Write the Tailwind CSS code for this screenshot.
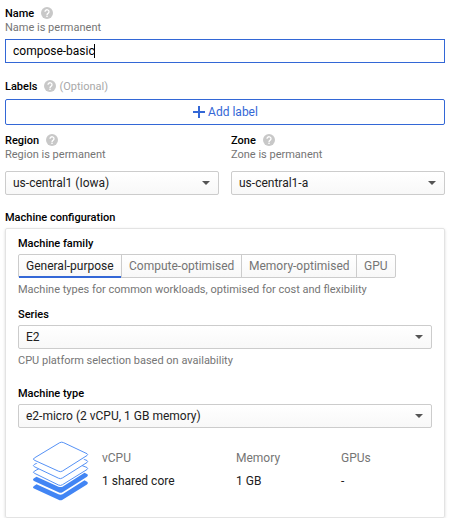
<!DOCTYPE html>
<html lang="en">
<head>
<meta charset="utf-8">
<title>Create instance</title>
<script src="https://cdn.jsdelivr.net/npm/@tailwindcss/browser@4"></script>
</head>
<body class="bg-white font-['Roboto',sans-serif] text-[12px] text-[#212121]">
<svg class="hidden">
  <symbol id="help" viewBox="0 0 12 12"><circle cx="6" cy="6" r="6" fill="#c8c8c8"/><path d="M4 4.7a2 1.9 0 1 1 3.2 1.5C6.4 6.8 6 7 6 7.9" fill="none" stroke="#fff" stroke-width="1.3"/><rect x="5.3" y="8.6" width="1.4" height="1.4" fill="#fff"/></symbol>
  <symbol id="caret" viewBox="0 0 8 4"><path d="M0 0h8L4 4z" fill="#555"/></symbol>
</svg>
<main class="flex w-[452px] flex-col pt-[6px] pr-[7px] pl-[5px]">
  <div class="flex h-[14px] items-center gap-[7px] text-[11px] font-medium text-black"><span class="pt-[2px]">Name</span><svg class="size-3"><use href="#help"/></svg></div>
  <p class="h-[14px] text-[11px] leading-[16px] text-[#757575]">Name is permanent</p>
  <div class="mt-[5px] flex h-6 items-center border border-[#3367d6] pl-[7px] text-black"><span>compose-basic</span><span class="-ml-px h-[14px] w-px bg-black"></span></div>

  <div class="mt-4 flex h-[14px] items-center text-[11px] font-medium text-black"><span class="pt-[2px]">Labels</span><svg class="ml-[7px] size-3"><use href="#help"/></svg><span class="ml-[3px] pt-[2px] font-normal text-[#a8a8a8]">(Optional)</span></div>
  <button class="mt-[6px] flex h-[26px] items-center justify-center gap-[3px] rounded-[2px] border border-[#3367d6] pl-px text-[#3367d6]"><svg class="size-3" viewBox="0 0 12 12"><path d="M6 0v12M0 6h12" stroke="#3367d6" stroke-width="2"/></svg><span>Add label</span></button>

  <div class="mt-2 grid grid-cols-2 gap-3">
    <div>
      <div class="flex h-[14px] items-center gap-[7px] text-[11px] font-medium text-black"><span class="pt-[2px]">Region</span><svg class="size-3"><use href="#help"/></svg></div>
      <p class="h-[14px] text-[11px] leading-[16px] text-[#757575]">Region is permanent</p>
      <div class="mt-[10px] flex h-6 items-center justify-between rounded-[2px] border border-[#ccc] bg-linear-to-b from-white to-[#f8f8f8] pr-2 pl-[7px]"><span>us-central1 (Iowa)</span><svg class="h-1 w-2"><use href="#caret"/></svg></div>
    </div>
    <div>
      <div class="flex h-[14px] items-center gap-[7px] text-[11px] font-medium text-black"><span class="pt-[2px]">Zone</span><svg class="size-3"><use href="#help"/></svg></div>
      <p class="h-[14px] text-[11px] leading-[16px] text-[#757575]">Zone is permanent</p>
      <div class="mt-[10px] flex h-6 items-center justify-between rounded-[2px] border border-[#ccc] bg-linear-to-b from-white to-[#f8f8f8] pr-2 pl-[7px]"><span>us-central1-a</span><svg class="h-1 w-2"><use href="#caret"/></svg></div>
    </div>
  </div>

  <h2 class="mt-[15px] h-[14px] text-[11px] leading-[16px] font-medium text-black">Machine configuration</h2>
  <section class="mt-1 flex h-[290px] flex-col rounded-[2px] border border-[#e3e3e3] px-3 pt-[7px] shadow-[0_1px_3px_rgba(0,0,0,0.15)]">
    <h3 class="h-[14px] text-[11px] leading-[16px] font-medium text-black">Machine family</h3>
    <div class="mt-1 flex h-6 w-[378px] rounded-[2px] border border-[#ccc] bg-linear-to-b from-white to-[#f8f8f8] text-[#757575]">
      <div class="-mb-px flex w-[103px] items-center border-r border-r-[#ccc] pb-px pl-[7px] text-[#212121] shadow-[inset_0_-2px_0_#3367d6]">General-purpose</div>
      <div class="flex w-[120px] items-center border-r border-[#ccc] pl-[7px]">Compute-optimised</div>
      <div class="flex w-[115px] items-center border-r border-[#ccc] pl-[7px]">Memory-optimised</div>
      <div class="flex items-center pl-[7px]">GPU</div>
    </div>
    <p class="mt-1 h-[14px] text-[11px] leading-[16px] text-[#757575]">Machine types for common workloads, optimised for cost and flexibility</p>
    <h3 class="mt-[11px] h-[14px] text-[11px] leading-[16px] font-medium text-black">Series</h3>
    <div class="mt-1 flex h-6 items-center justify-between rounded-[2px] border border-[#ccc] bg-linear-to-b from-white to-[#f8f8f8] pr-2 pl-[7px]"><span>E2</span><svg class="h-1 w-2"><use href="#caret"/></svg></div>
    <p class="mt-1 h-[14px] text-[11px] leading-[16px] text-[#757575]">CPU platform selection based on availability</p>
    <h3 class="mt-[19px] h-[14px] text-[11px] leading-[16px] font-medium text-black">Machine type</h3>
    <div class="mt-1 flex h-6 items-center justify-between rounded-[2px] border border-[#ccc] bg-linear-to-b from-white to-[#f8f8f8] pr-2 pl-[7px]"><span>e2-micro (2 vCPU, 1 GB memory)</span><svg class="h-1 w-2"><use href="#caret"/></svg></div>
    <div class="mt-[13px] flex pl-[14px]">
      <svg class="h-[60px] w-[58px]" viewBox="32 441 58 60" fill="#fff" stroke="#4285f4" stroke-width="0.9" stroke-linejoin="round">
        <path id="slab" d="M36.500 476.700L58.500 486.700Q60.500 487.500 62.500 486.700L84.500 472.700L87.500 474.300Q88.500 475.500 87 476.800L62.500 492.200Q60.500 493.200 58.500 492.200L34 481Q32 479.700 34 478.300Z" fill="#4285f4" stroke="none"/>
        <use href="#slab" y="7.600"/>
        <path d="M34.300 473.200Q32.500 472.200 34.300 471.200L60 457L87 467.500Q88.300 468.500 87 469.500L62.500 484.700Q60.500 486 58.500 485Z"/>
        <path d="M34.300 466.700Q32.500 465.500 34.300 464.500L60 450L87 460.500Q88.300 461.500 87 462.500L62.500 477.900Q60.500 479.200 58.500 478.200Z"/>
        <path d="M34.300 460.200Q32.500 459 34.300 458L59.700 442.700Q61.700 441.600 63.700 442.700L87 453.700Q88.300 454.500 87 455.500L62.500 471Q60.500 472.200 58.500 471.200Z" stroke="#fff" stroke-width="3.500"/>
        <path d="M34.300 460.200Q32.500 459 34.300 458L59.700 442.700Q61.700 441.600 63.700 442.700L87 453.700Q88.300 454.500 87 455.500L62.500 471Q60.500 472.200 58.500 471.200Z"/>
      </svg>
      <div class="ml-3 w-[134px] pt-[10px]"><p class="h-[14px] leading-[14px] text-[#757575]">vCPU</p><p class="mt-[9px] h-[14px] leading-[14px]">1 shared core</p></div>
      <div class="w-[105px] pt-[10px]"><p class="h-[14px] leading-[14px] text-[#757575]">Memory</p><p class="mt-[9px] h-[14px] leading-[14px]">1 GB</p></div>
      <div class="pt-[10px]"><p class="h-[14px] leading-[14px] text-[#757575]">GPUs</p><p class="mt-[9px] h-[14px] leading-[14px]">-</p></div>
    </div>
  </section>
</main>
</body>
</html>
